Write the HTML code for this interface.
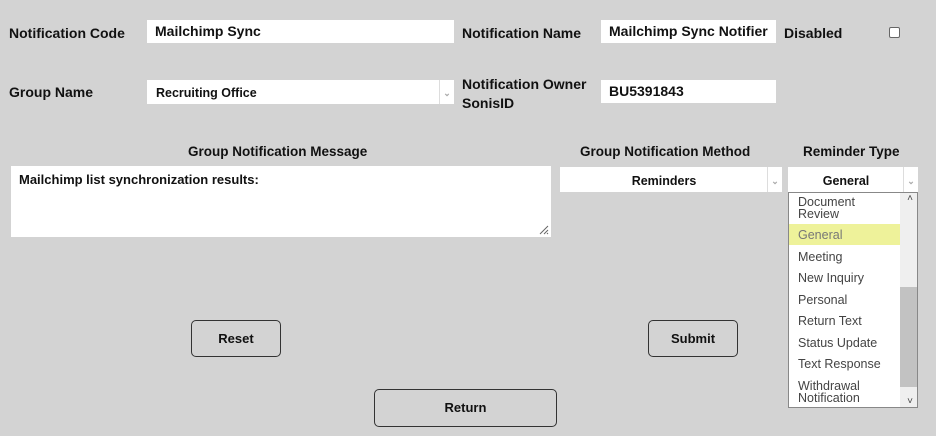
<!DOCTYPE html>
<html><head><style>
body{margin:0;width:936px;height:436px;background:#d3d3d3;font-family:"Liberation Sans",sans-serif;position:relative;overflow:hidden;color:#111}
.a{position:absolute}
.lbl{font-weight:bold;font-size:14px}
.inp{background:#fff;font-weight:bold;font-size:14px;box-sizing:border-box;padding-left:8px;line-height:22px}
.sel{background:#fff;font-weight:bold;font-size:12.5px;box-sizing:border-box;border-right:0}
.arr{position:absolute;right:0;top:0;width:14px;height:100%;border-left:1px solid #ddd;color:#aaa;font-size:9px;text-align:center}
.btn{border:1px solid #333;border-radius:5px;background:#d3d3d3;font-weight:bold;font-size:13px;text-align:center;box-sizing:border-box}
.opt{position:absolute;left:9px;font-size:12.5px;color:#444;line-height:12px}
</style></head><body>
<div class="a lbl" style="left:9px;top:25px">Notification Code</div>
<div class="a inp" style="left:147px;top:20px;width:307px;height:23px">Mailchimp Sync</div>
<div class="a lbl" style="left:462px;top:25px">Notification Name</div>
<div class="a inp" style="left:601px;top:20px;width:175px;height:23px">Mailchimp Sync Notifier</div>
<div class="a lbl" style="left:784px;top:25px">Disabled</div>
<div class="a" style="left:889px;top:27px;width:9px;height:9px;border:1px solid #666;background:#fff;border-radius:2px"></div>

<div class="a lbl" style="left:9px;top:84px">Group Name</div>
<div class="a sel" style="left:147px;top:80px;width:307px;height:24px;line-height:26px;padding-left:9px">Recruiting Office<div class="arr">&#8964;</div></div>
<div class="a lbl" style="left:462px;top:75px;line-height:19px">Notification Owner<br>SonisID</div>
<div class="a inp" style="left:601px;top:80px;width:175px;height:23px">BU5391843</div>

<div class="a lbl" style="left:188px;top:144px;font-size:13.5px">Group Notification Message</div>
<div class="a" style="left:11px;top:166px;width:540px;height:71px;background:#fff;box-sizing:border-box;padding:6px 8px;font-weight:bold;font-size:13px">Mailchimp list synchronization results:
<svg class="a" style="right:2px;bottom:2px" width="12" height="12"><path d="M11 3L3 11M11 7L7 11M11 10L10 11" stroke="#666"/></svg></div>

<div class="a lbl" style="left:580px;top:144px;font-size:13.5px">Group Notification Method</div>
<div class="a sel" style="left:560px;top:167px;width:222px;height:25px;line-height:28px;text-align:center;padding-right:14px">Reminders<div class="arr">&#8964;</div></div>

<div class="a lbl" style="left:803px;top:144px;font-size:13.5px">Reminder Type</div>
<div class="a sel" style="left:788px;top:167px;width:130px;height:25px;line-height:28px;text-align:center;padding-right:14px">General<div class="arr">&#8964;</div></div>
<div class="a" style="left:788px;top:192px;width:130px;height:216px;background:#fff;border:1px solid #888;box-sizing:border-box">
<div class="a" style="right:0;top:0;width:17px;height:214px;background:#efefef"></div>
<div class="a" style="right:0;top:94px;width:17px;height:100px;background:#c2c2c2"></div>
<div class="a" style="right:4px;top:0;font-size:10px;color:#444">&#708;</div>
<div class="a" style="right:4px;bottom:0;font-size:10px;color:#444">&#709;</div>
<div class="a" style="left:0;top:31px;width:111px;height:21px;background:#eef29a"></div>
<div class="opt" style="top:3px">Document<br>Review</div>
<div class="opt" style="top:36px;color:#777">General</div>
<div class="opt" style="top:58px">Meeting</div>
<div class="opt" style="top:79px">New Inquiry</div>
<div class="opt" style="top:101px">Personal</div>
<div class="opt" style="top:122px">Return Text</div>
<div class="opt" style="top:144px">Status Update</div>
<div class="opt" style="top:165px">Text Response</div>
<div class="opt" style="top:187px">Withdrawal<br>Notification</div>
</div>

<div class="a btn" style="left:191px;top:320px;width:90px;height:37px;line-height:35px">Reset</div>
<div class="a btn" style="left:648px;top:320px;width:90px;height:37px;line-height:35px">Submit</div>
<div class="a btn" style="left:374px;top:389px;width:183px;height:38px;line-height:36px">Return</div>
</body></html>
